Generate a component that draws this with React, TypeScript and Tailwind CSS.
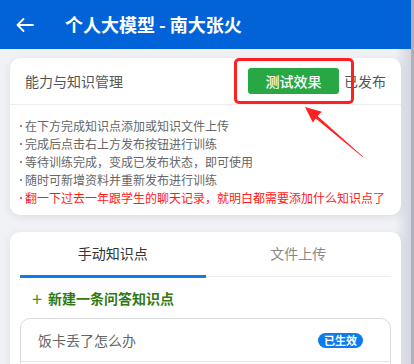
const TIPS = [
  "在下方完成知识点添加或知识文件上传",
  "完成后点击右上方发布按钮进行训练",
  "等待训练完成，变成已发布状态，即可使用",
  "随时可新增资料并重新发布进行训练",
];

function Dot() {
  return (
    <span className="w-[5px] shrink-0 flex items-center">
      <span className="w-[2px] h-[2px] rounded-full bg-current" />
    </span>
  );
}

export default function App() {
  return (
    <div className="w-[414px] h-[364px] overflow-hidden flex font-['Noto_Sans_CJK_SC',sans-serif]">
      <div className="flex-1 flex flex-col min-w-0">
        {/* Header */}
        <header className="h-[49px] shrink-0 bg-[#0263d8] flex items-center text-white">
          <svg width="18" height="14" viewBox="0 0 18 14" className="ml-[16px]" fill="none" stroke="white" strokeWidth="1.8" strokeLinecap="round" strokeLinejoin="round">
            <path d="M17 7H1.5M7.5 1L1.5 7l6 6" />
          </svg>
          <h1 className="ml-[31px] text-[18px] font-bold">个人大模型 - 南大张火</h1>
        </header>

        {/* Content */}
        <div className="flex-1 bg-[linear-gradient(to_right,#f1f2f6_96%,#d3d6e1)] px-[10px] pt-[9px]">
          <section className="relative rounded-[10px] bg-white shadow-[0_2px_8px_rgba(40,50,80,0.10)]">
            <div className="h-[47px] flex items-center pl-[15px] pr-[15px] border-b border-[#ececef]">
              <span className="text-[14px] text-[#555]">能力与知识管理</span>
              <button className="ml-auto w-[91px] h-[26px] rounded-[3px] bg-[#28a745] text-white text-[14px] font-medium">
                测试效果
              </button>
              <span className="ml-[5px] text-[14px] text-[#555]">已发布</span>
            </div>
            <ul className="pt-[12px] pb-[8px] pl-[10px] text-[12px] leading-[18px] text-[#666]">
              {TIPS.map((t) => (
                <li key={t} className="flex">
                  <Dot />
                  <span>{t}</span>
                </li>
              ))}
              <li className="flex text-[#ff1a1a]">
                <Dot />
                <span>翻一下过去一年跟学生的聊天记录，就明白都需要添加什么知识点了</span>
              </li>
            </ul>

            {/* annotation */}
            <div className="absolute left-[224px] top-0 w-[120px] h-[46px] border-[3px] border-[#ff2020] rounded-[5px]" />
            <svg className="absolute left-[290px] top-[44px]" width="70" height="62" viewBox="0 0 70 62">
              <polygon points="5,5 21.8,9.8 17.5,14 63.2,54.8 62.8,55.2 15.8,16.6 12.8,20.6" fill="#ff2020" />
            </svg>
          </section>

          <section className="mt-[17px] rounded-[10px] bg-white px-[10px] pt-[11px] pb-[10px] shadow-[0_2px_8px_rgba(40,50,80,0.10)]">
            <div className="flex">
              <div className="flex-1 text-center text-[14px] leading-[20px] pb-[12px] text-[#333] border-b-[3px] border-[#0a7cf0]">
                手动知识点
              </div>
              <div className="flex-1 text-center text-[14px] leading-[20px] pb-[12px] text-[#888] border-b border-[#eee] mb-[1px]">
                文件上传
              </div>
            </div>
            <div className="pt-[10px] pl-[12px] flex items-center leading-[20px]">
              <span className="text-[18px] text-[#4e8f2e] w-[16px]">+</span>
              <span className="text-[14px] font-bold text-[#2f7a12]">新建一条问答知识点</span>
            </div>
            <div className="mt-[10px] rounded-[10px] border border-[#dcdde0]">
              <div className="h-[43px] flex items-center justify-between pl-[17px] pr-[27px] border-b border-[#e2e3e6]">
                <span className="text-[14px] text-[#666]">饭卡丢了怎么办</span>
                <span className="h-[15px] w-[45px] rounded-full bg-[#0a7cf0] text-white text-[11px] font-bold leading-[15px] text-center">
                  已生效
                </span>
              </div>
              <div className="h-[43px]" />
            </div>
          </section>
        </div>
      </div>
      <div className="w-[3px] shrink-0 bg-[#aeb1bc]" />
    </div>
  );
}
